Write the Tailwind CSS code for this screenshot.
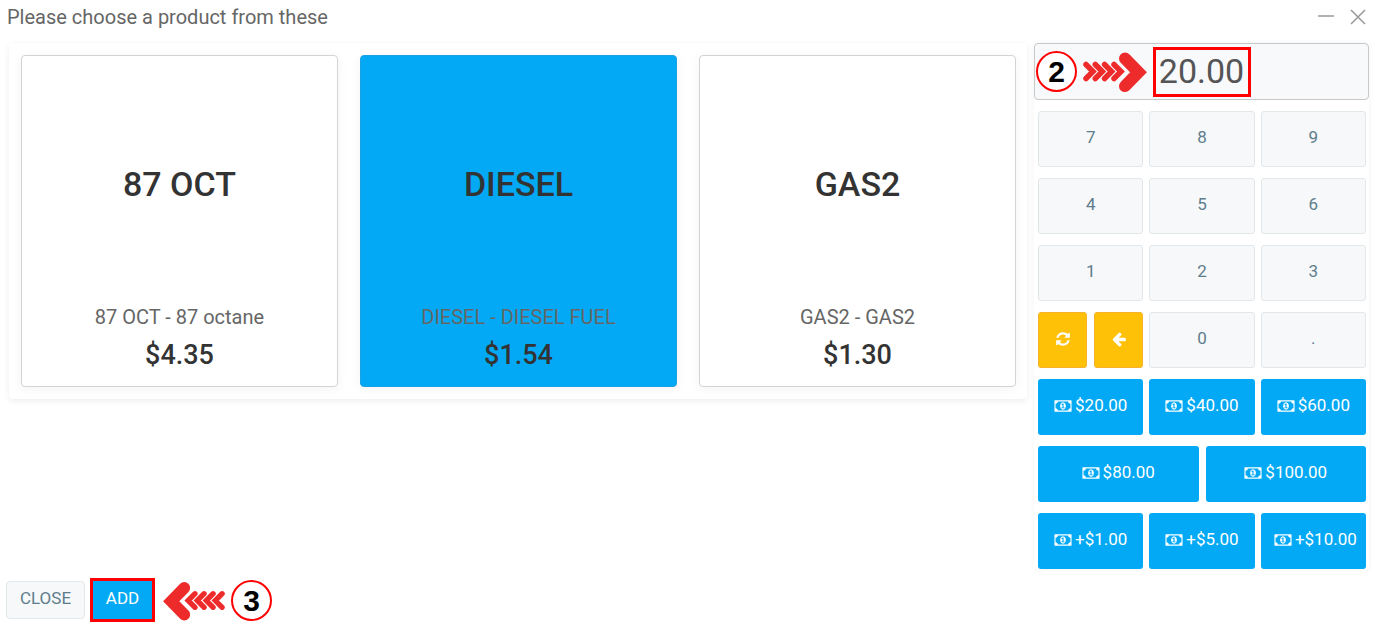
<!DOCTYPE html>
<html lang="en">

<head>
    <meta charset="UTF-8">
    <meta name="viewport" content="width=device-width, initial-scale=1.0">
    <script src="https://cdn.jsdelivr.net/npm/@tailwindcss/browser@4"></script>
    <title>Choose a product</title>
</head>

<body class="bg-white font-['Roboto',sans-serif] text-[#666]">
    <!-- shared icons -->
    <svg class="hidden">
        <symbol id="money" viewBox="0 0 1920 1792">
            <path d="M768 1152h384v-96h-128v-448h-114l-148 137 77 80q42-37 55-57h2v288h-128v96zm512-256q0 70-21 142t-59.5 134-101.5 101-138 39-138-39-101.5-101-59.5-134-21-142 21-142 59.5-134 101.5-101 138-39 138 39 101.5 101 59.5 134 21 142zm512 256v-512q-106 0-181-75t-75-181h-1152q0 106-75 181t-181 75v512q106 0 181 75t75 181h1152q0-106 75-181t181-75zm128-832v1152q0 26-19 45t-45 19h-1792q-26 0-45-19t-19-45v-1152q0-26 19-45t45-19h1792q26 0 45 19t19 45z" />
        </symbol>
        <symbol id="chevrons" viewBox="0 0 64 42">
            <g fill="none" stroke="#ee2b2b" stroke-linecap="round">
                <path stroke-width="5.500" d="M3 13.500l7 7-7 7M12.300 13.500l7 7-7 7M21.600 13.500l7 7-7 7M31 13.500l7 7-7 7" />
                <path stroke-width="12" d="M42 7.500l13.500 13.800-13.500 13.800" />
            </g>
        </symbol>
    </svg>

    <div class="flex flex-col min-h-screen pb-1">
        <header class="flex items-center justify-between h-[34px] pl-[7px] pr-3">
            <h1 class="text-[20px] leading-6">Please choose a product from these</h1>
            <div class="flex items-center gap-4">
                <button aria-label="Minimize">
                    <svg class="w-4 h-4" viewBox="0 0 16 16" fill="none" stroke="#999" stroke-width="1.500"><path d="M0 7h16" /></svg>
                </button>
                <button aria-label="Close window">
                    <svg class="w-4 h-4" viewBox="0 0 16 16" fill="none" stroke="#999" stroke-width="1.500"><path d="M1 1l14 14M15 1L1 15" /></svg>
                </button>
            </div>
        </header>

        <main class="flex grow items-start gap-[7px] pt-[9px] pl-[9px] pr-[9px]">
            <section class="grid grid-cols-3 grow gap-[22px] pl-3 pr-[11px] py-3 rounded-[4px] shadow-[0_2px_6px_rgba(0,0,0,0.07)]">
                <button class="flex flex-col items-center h-[332px] pt-[106px] pb-[15px] bg-white border border-[#d4d4d4] rounded-[4px] shadow-[0_2px_12px_rgba(0,0,0,0.05)]">
                    <span class="text-[34px] leading-[44px] font-medium text-[#333]">87 OCT</span>
                    <span class="mt-auto text-[20px] leading-7">87 OCT - 87 octane</span>
                    <span class="mt-2 text-[27px] leading-8 font-medium text-[#333]">$4.35</span>
                </button>
                <button class="flex flex-col items-center h-[332px] pt-[106px] pb-[15px] bg-[#03a9f4] border border-[#1ba2e2] rounded-[4px] shadow-[0_2px_12px_rgba(0,0,0,0.05)]">
                    <span class="text-[34px] leading-[44px] font-medium text-[#333]">DIESEL</span>
                    <span class="mt-auto text-[20px] leading-7">DIESEL - DIESEL FUEL</span>
                    <span class="mt-2 text-[27px] leading-8 font-medium text-[#333]">$1.54</span>
                </button>
                <button class="flex flex-col items-center h-[332px] pt-[106px] pb-[15px] bg-white border border-[#d4d4d4] rounded-[4px] shadow-[0_2px_12px_rgba(0,0,0,0.05)]">
                    <span class="text-[34px] leading-[44px] font-medium text-[#333]">GAS2</span>
                    <span class="mt-auto text-[20px] leading-7">GAS2 - GAS2</span>
                    <span class="mt-2 text-[27px] leading-8 font-medium text-[#333]">$1.30</span>
                </button>
            </section>

            <section class="w-[335px] shrink-0 shadow-[0_0_6px_rgba(0,0,0,0.05)]">
                <div class="relative">
                    <input type="text" value="20.00" aria-label="Amount"
                        class="block w-full h-[57px] pb-[2px] text-center text-[34px] text-[#555] bg-[#f8f9fb] border border-[#c8c8c8] rounded-[4px]">
                    <!-- step 2 callout -->
                    <div class="absolute inset-y-0 left-[2px] flex items-center gap-[6px] pointer-events-none">
                        <span class="flex items-center justify-center w-[41px] h-[41px] rounded-full border-2 border-[#f00] bg-white font-['Liberation_Sans',sans-serif] font-bold text-[30px] text-black">2</span>
                        <svg class="w-16 h-[42px]"><use href="#chevrons" /></svg>
                    </div>
                    <div class="absolute left-1/2 top-1 w-[98px] h-[50px] -translate-x-1/2 border-3 border-[#f00] pointer-events-none"></div>
                </div>

                <div class="flex flex-col gap-[11px] pt-[11px] pl-1 pr-[3px] text-[17px] text-[#607d8b]">
                    <div class="grid grid-cols-3 gap-[6px]">
                        <button class="h-14 pb-[2px] bg-[#f6f8fa] border border-[#e2e7ea] rounded-[3px]">7</button>
                        <button class="h-14 pb-[2px] bg-[#f6f8fa] border border-[#e2e7ea] rounded-[3px]">8</button>
                        <button class="h-14 pb-[2px] bg-[#f6f8fa] border border-[#e2e7ea] rounded-[3px]">9</button>
                    </div>
                    <div class="grid grid-cols-3 gap-[6px]">
                        <button class="h-14 pb-[2px] bg-[#f6f8fa] border border-[#e2e7ea] rounded-[3px]">4</button>
                        <button class="h-14 pb-[2px] bg-[#f6f8fa] border border-[#e2e7ea] rounded-[3px]">5</button>
                        <button class="h-14 pb-[2px] bg-[#f6f8fa] border border-[#e2e7ea] rounded-[3px]">6</button>
                    </div>
                    <div class="grid grid-cols-3 gap-[6px]">
                        <button class="h-14 pb-[2px] bg-[#f6f8fa] border border-[#e2e7ea] rounded-[3px]">1</button>
                        <button class="h-14 pb-[2px] bg-[#f6f8fa] border border-[#e2e7ea] rounded-[3px]">2</button>
                        <button class="h-14 pb-[2px] bg-[#f6f8fa] border border-[#e2e7ea] rounded-[3px]">3</button>
                    </div>
                    <div class="grid grid-cols-3 gap-[6px]">
                        <div class="grid grid-cols-2 gap-[7px]">
                            <button aria-label="Reset" class="flex items-center justify-center h-14 pb-[2px] bg-[#ffc107] border border-[#f5b32a] rounded-[3px]">
                                <svg class="w-4 h-4 fill-white" viewBox="0 0 1792 1792"><path d="M1639 1056q0 5-1 7-64 268-268 434.500t-478 166.500q-146 0-282.500-55t-243.500-157l-129 129q-19 19-45 19t-45-19-19-45v-448q0-26 19-45t45-19h448q26 0 45 19t19 45-19 45l-137 137q71 66 161 102t187 36q134 0 250-65t186-179q11-17 53-117 8-23 30-23h192q13 0 22.500 9.500t9.500 22.500zm25-800v448q0 26-19 45t-45 19h-448q-26 0-45-19t-19-45 19-45l138-138q-148-137-349-137-134 0-250 65t-186 179q-11 17-53 117-8 23-30 23h-199q-13 0-22.500-9.500t-9.500-22.500v-7q65-268 270-434.500t480-166.500q146 0 284 55.500t245 156.500l130-129q19-19 45-19t45 19 19 45z" /></svg>
                            </button>
                            <button aria-label="Backspace" class="flex items-center justify-center h-14 pb-[2px] bg-[#ffc107] border border-[#f5b32a] rounded-[3px]">
                                <svg class="w-4 h-4 fill-white" viewBox="0 0 1792 1792"><path d="M1664 896v128q0 53-32.500 90.500t-84.500 37.500h-704l293 294q38 36 38 90t-38 90l-75 76q-37 37-90 37-52 0-91-37l-651-652q-37-37-37-90 0-52 37-91l651-650q38-38 91-38 52 0 90 38l75 74q38 38 38 91t-38 91l-293 293h704q52 0 84.500 37.500t32.500 90.500z" /></svg>
                            </button>
                        </div>
                        <button class="h-14 pb-[2px] bg-[#f6f8fa] border border-[#e2e7ea] rounded-[3px]">0</button>
                        <button class="h-14 pb-[2px] bg-[#f6f8fa] border border-[#e2e7ea] rounded-[3px]">.</button>
                    </div>
                    <div class="grid grid-cols-3 gap-[6px] text-white">
                        <button class="flex items-center justify-center gap-[3px] h-14 pb-[2px] bg-[#03a9f4] rounded-[3px]"><svg class="w-[18px] h-4 fill-white"><use href="#money" /></svg>$20.00</button>
                        <button class="flex items-center justify-center gap-[3px] h-14 pb-[2px] bg-[#03a9f4] rounded-[3px]"><svg class="w-[18px] h-4 fill-white"><use href="#money" /></svg>$40.00</button>
                        <button class="flex items-center justify-center gap-[3px] h-14 pb-[2px] bg-[#03a9f4] rounded-[3px]"><svg class="w-[18px] h-4 fill-white"><use href="#money" /></svg>$60.00</button>
                    </div>
                    <div class="grid grid-cols-2 gap-[7px] text-white">
                        <button class="flex items-center justify-center gap-[3px] h-14 pb-[2px] bg-[#03a9f4] rounded-[3px]"><svg class="w-[18px] h-4 fill-white"><use href="#money" /></svg>$80.00</button>
                        <button class="flex items-center justify-center gap-[3px] h-14 pb-[2px] bg-[#03a9f4] rounded-[3px]"><svg class="w-[18px] h-4 fill-white"><use href="#money" /></svg>$100.00</button>
                    </div>
                    <div class="grid grid-cols-3 gap-[6px] text-white">
                        <button class="flex items-center justify-center gap-[3px] h-14 pb-[2px] bg-[#03a9f4] rounded-[3px]"><svg class="w-[18px] h-4 fill-white"><use href="#money" /></svg>+$1.00</button>
                        <button class="flex items-center justify-center gap-[3px] h-14 pb-[2px] bg-[#03a9f4] rounded-[3px]"><svg class="w-[18px] h-4 fill-white"><use href="#money" /></svg>+$5.00</button>
                        <button class="flex items-center justify-center gap-[3px] h-14 pb-[2px] pl-1 bg-[#03a9f4] rounded-[3px]"><svg class="w-[18px] h-4 fill-white"><use href="#money" /></svg>+$10.00</button>
                    </div>
                </div>
            </section>
        </main>

        <footer class="flex items-center pl-[6px] text-[17px]">
            <button class="h-[38px] w-[79px] pb-[2px] mr-[5px] bg-[#f6f8fa] border border-[#e2e7ea] rounded-[4px] text-[#607d8b]">CLOSE</button>
            <div class="flex border-3 border-[#f00]">
                <button class="h-[38px] w-[59px] pb-[2px] bg-[#03a9f4] text-white">ADD</button>
            </div>
            <!-- step 3 callout -->
            <svg class="w-[62px] h-[42px] mt-[2px] ml-2 mr-[6px] -scale-x-100"><use href="#chevrons" /></svg>
            <span class="flex items-center justify-center w-[41px] h-[41px] rounded-full border-2 border-[#f00] bg-white font-['Liberation_Sans',sans-serif] font-bold text-[30px] text-black">3</span>
        </footer>
    </div>
</body>

</html>
